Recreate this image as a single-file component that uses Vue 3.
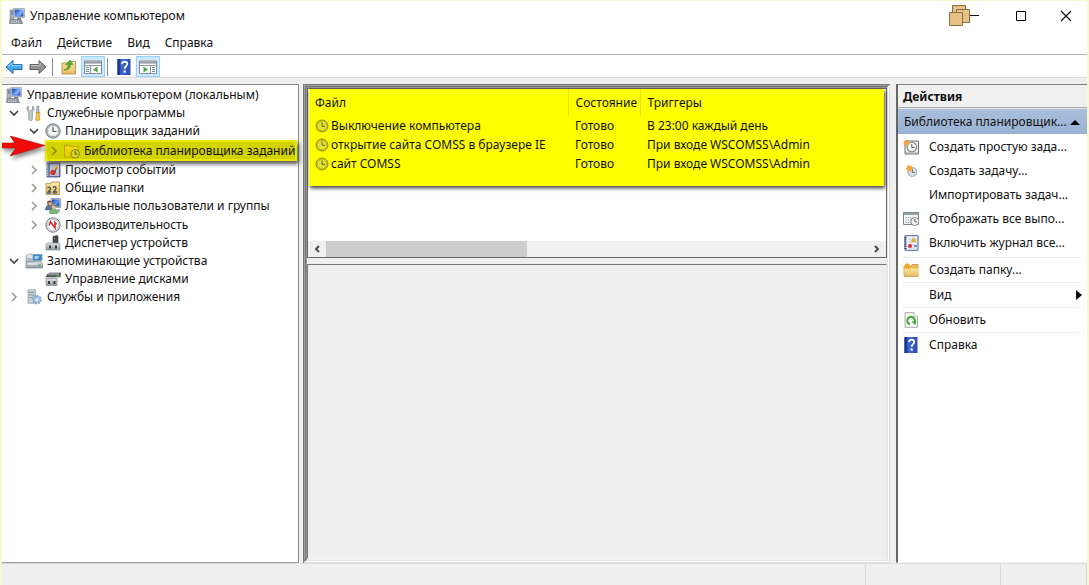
<script setup>
import { ref } from 'vue'

const menus = ['Файл', 'Действие', 'Вид', 'Справка']

const tree = [
  { label: 'Управление компьютером (локальным)', icon: 'computer', level: 'root' },
  { label: 'Служебные программы', icon: 'tools', level: 'one', arrow: 'open' },
  { label: 'Планировщик заданий', icon: 'clock', level: 'two', arrow: 'open' },
  { label: 'Библиотека планировщика заданий', icon: 'library', level: 'three', arrow: 'closed', selected: true },
  { label: 'Просмотр событий', icon: 'events', level: 'two', arrow: 'closed' },
  { label: 'Общие папки', icon: 'shared', level: 'two', arrow: 'closed' },
  { label: 'Локальные пользователи и группы', icon: 'users', level: 'two', arrow: 'closed' },
  { label: 'Производительность', icon: 'perf', level: 'two', arrow: 'closed' },
  { label: 'Диспетчер устройств', icon: 'device', level: 'two' },
  { label: 'Запоминающие устройства', icon: 'storage', level: 'one', arrow: 'open' },
  { label: 'Управление дисками', icon: 'disk', level: 'two' },
  { label: 'Службы и приложения', icon: 'services', level: 'one', arrow: 'closed' }
]

const tasks = [
  { name: 'Выключение компьютера', state: 'Готово', trigger: 'В 23:00 каждый день' },
  { name: 'открытие сайта COMSS в браузере IE', state: 'Готово', trigger: 'При входе WSCOMSS\\Admin' },
  { name: 'сайт COMSS', state: 'Готово', trigger: 'При входе WSCOMSS\\Admin' }
]

const taskActions = [
  { label: 'Создать простую зада...', icon: 'newbasic' },
  { label: 'Создать задачу...', icon: 'newtask' },
  { label: 'Импортировать задач...' },
  { label: 'Отображать все выпо...', icon: 'running' },
  { label: 'Включить журнал все...', icon: 'journal' }
]
const commonActions = [
  { label: 'Создать папку...', icon: 'newfolder' },
  { label: 'Вид', submenu: true },
  { label: 'Обновить', icon: 'refresh' },
  { label: 'Справка', icon: 'help' }
]

const scroll = ref({ size: 37 })
</script>

<template>
  <div class="window">
    <svg class="sprite" aria-hidden="true">
      <defs>
        <linearGradient id="gBlue" x1="0" y1="0" x2="1" y2="1"><stop offset="0" stop-color="#1c3fae" /><stop offset="0.5" stop-color="#5e95ea" /><stop offset="1" stop-color="#1b39a0" /></linearGradient>
        <linearGradient id="gHelp" x1="0" y1="0" x2="1" y2="0"><stop offset="0" stop-color="#1d3c9c" /><stop offset="0.35" stop-color="#3c68cc" /><stop offset="1" stop-color="#2a4cb0" /></linearGradient>
        <linearGradient id="gFolder" x1="0" y1="0" x2="0" y2="1"><stop offset="0" stop-color="#fbe3a0" /><stop offset="1" stop-color="#e9bd62" /></linearGradient>
        <linearGradient id="gMetal" x1="0" y1="0" x2="0" y2="1"><stop offset="0" stop-color="#e3e7ea" /><stop offset="1" stop-color="#8c959b" /></linearGradient>
      </defs>
      <symbol id="computer" viewBox="0 0 16 16">
        <path d="M1 2h4v9H1z" fill="#aeb5ba" stroke="#7f878d" stroke-width=".7" /><path d="M2 4h2M2 6h2" stroke="#5e666c" />
        <path d="M4.500.5l11-.1v9.400l-11-.6z" fill="#d6dbe4" stroke="#8a93a5" stroke-width=".7" /><path d="M5.600 1.600h8.800v7H5.600z" fill="url(#gBlue)" /><path d="M8 8l4-6.400h2.400V4L11 8.600z" fill="#8ab6f5" opacity=".7" />
        <path d="M8 10h4v1.500H8z" fill="#777f88" /><path d="M1 11.500h11l1.500 4H.5z" fill="#8e969c" stroke="#666e74" stroke-width=".6" /><path d="M2.500 13h8M2 14.400h9" stroke="#d5dade" stroke-dasharray="1.200 1" />
      </symbol>
      <symbol id="tools" viewBox="0 0 16 16">
        <path d="M2.200 1v3.400L4.500 6l2-1.400V1c2 1.200 2 4.600-.2 5.900V14c0 2-3.500 2-3.500 0V6.900C.4 5.600.5 2.200 2.200 1z" fill="#c7cdd1" stroke="#858c91" stroke-width=".8" />
        <path d="M10.800 1h2l.3 6.500h-2.600z" fill="#b6bcc0" stroke="#83898e" stroke-width=".6" /><path d="M10 7.500h3.600V9l-.6.700.8 4.500c0 2-4.100 2-4.100 0l.8-4.500-.5-.7z" fill="#f4c443" stroke="#bb8a1b" stroke-width=".7" />
      </symbol>
      <symbol id="clock" viewBox="0 0 16 16">
        <circle cx="8" cy="8" r="7.200" fill="#b8bfc5" stroke="#777f86" stroke-width="1" /><circle cx="8" cy="8" r="5.700" fill="#f5f6f2" stroke="#8b949c" stroke-width=".6" />
        <path d="M8 4v4.500h3.500" fill="none" stroke="#4d565e" stroke-width="1.100" /><path d="M8 2.600v1M8 12.500v1M2.600 8h1M12.500 8h1" stroke="#8a9299" stroke-width=".7" />
      </symbol>
      <symbol id="taskclock" viewBox="0 0 14 14">
        <circle cx="7" cy="7" r="6" fill="#d6d416" stroke="#8d8b18" stroke-width="1" /><circle cx="7" cy="7" r="4.600" fill="#e4e238" stroke="#adab20" stroke-width=".6" /><path d="M7 3.500v3.800h3" fill="none" stroke="#6b6a18" stroke-width="1" />
      </symbol>
      <symbol id="library" viewBox="0 0 16 16">
        <path d="M.5 2h5l1 1.500h7.500V14H.5z" fill="#e9cf00" stroke="#b39b00" stroke-width=".8" /><path d="M1 5h12.500" stroke="#f8ea42" />
        <circle cx="11.200" cy="10.800" r="4.200" fill="#d6d430" stroke="#747412" stroke-width=".9" /><path d="M11.200 8.200v3h2.200" fill="none" stroke="#555410" />
      </symbol>
      <symbol id="events" viewBox="0 0 16 16">
        <path d="M2 1h13v14H2z" fill="#6a79a5" stroke="#41507d" stroke-width=".8" /><path d="M5 2h9v12H5z" fill="#b9c3dd" /><path d="M2.500 2v12" stroke="#ced5e5" stroke-width="1.400" stroke-dasharray="1.200 1" />
        <path d="M11 2.500l2.500 4.500h-5z" fill="#f6bd26" /><circle cx="8" cy="10.500" r="2.700" fill="#d93632" /><path d="M11.500 5.500l-2 6" stroke="#6d3f44" />
      </symbol>
      <symbol id="shared" viewBox="0 0 16 16">
        <path d="M1 3.500h5l1-1.500h7.500v12.500H1z" fill="url(#gFolder)" stroke="#b58d3f" stroke-width=".8" /><path d="M7 4h7" stroke="#fff3c5" />
        <path d="M2.500 8c2-2 4 0 2.500 2L3 12h3M8 7.500c2-2 4 0 2.500 2L8.500 12h3.500" fill="none" stroke="#3f525a" stroke-width="1.300" /><path d="M2 13.500h4M8 13.500h4" stroke="#5d87ac" />
      </symbol>
      <symbol id="users" viewBox="0 0 16 16">
        <path d="M6 .5h9.500v9H6z" fill="#cbd5e8" stroke="#7585a6" stroke-width=".7" /><path d="M7 1.500h7.500v7H7z" fill="url(#gBlue)" />
        <path d="M.5 12c0-4 2-5 4-5s4 1 4 5z" fill="#57799f" stroke="#375574" stroke-width=".5" /><circle cx="4.500" cy="5" r="2.400" fill="#735035" /><circle cx="5" cy="5.700" r="1.600" fill="#e1b78e" />
        <path d="M4.500 15.500c0-4 2-5 4-5s4 1 4 5z" fill="#7eb776" stroke="#467e48" stroke-width=".5" /><circle cx="8.500" cy="8.600" r="2.300" fill="#bd8b51" /><circle cx="8.700" cy="9.200" r="1.500" fill="#edc59b" /><path d="M12 11h3v3.500h-3z" fill="#a6adb5" />
      </symbol>
      <symbol id="perf" viewBox="0 0 16 16">
        <circle cx="8" cy="8" r="7.200" fill="#dce0e2" stroke="#777f84" stroke-width="1" /><circle cx="8" cy="8" r="5.400" fill="#fff" stroke="#a4abb0" stroke-width=".6" /><path d="M4.200 8.500L5.500 4.800 10 11V5.500l1.500 2" fill="none" stroke="#d0272c" stroke-width="1.500" />
      </symbol>
      <symbol id="device" viewBox="0 0 16 16">
        <path d="M8 1.500l4-1 1 .8V9H8z" fill="#454b4e" stroke="#252a2c" stroke-width=".6" /><path d="M9.500 3v1" stroke="#a6afb2" /><path d="M2 8h12l1 1v6H1V9z" fill="url(#gMetal)" stroke="#8d9498" stroke-width=".7" /><path d="M4 10.500h2v3H4zM10 10.500h2v3h-2z" fill="#343b3f" />
      </symbol>
      <symbol id="storage" viewBox="0 0 18 16">
        <path d="M1 3.500v6c0 2 10 2 10 0v-6z" fill="url(#gMetal)" stroke="#8d969c" stroke-width=".6" /><ellipse cx="6" cy="3.500" rx="5" ry="2.500" fill="#dfe3e6" stroke="#8d969c" stroke-width=".7" />
        <path d="M8 1.500h9v6H8z" fill="#3e82bf" stroke="#799eb9" stroke-width=".8" /><path d="M9.500 3h5l-2 3h-3z" fill="#92d3ed" /><path d="M2 9l14-.5 1.500 2v4.500H1v-4z" fill="url(#gMetal)" stroke="#7e878c" stroke-width=".7" /><path d="M3 11h9" stroke="#f2f4f5" /><path d="M13.500 12.500h2" stroke="#35b23c" stroke-width="1.500" />
      </symbol>
      <symbol id="disk" viewBox="0 0 16 16">
        <path d="M2 4l2-2h12l-1 4H1z" fill="#596166" stroke="#363d40" stroke-width=".6" /><path d="M3 3h11" stroke="#c4ccd0" /><path d="M11.500 5h3" stroke="#49d344" stroke-width="1.200" /><path d="M1 7.500h11v7H1z" fill="url(#gMetal)" stroke="#858c90" stroke-width=".7" /><path d="M3 10h2v3H3zM8.500 10h2v3h-2z" fill="#343b3f" />
      </symbol>
      <symbol id="services" viewBox="0 0 16 16">
        <path d="M2 .8h7.500v13.500H2z" fill="#c5d0d5" stroke="#8e9ba1" stroke-width=".7" /><path d="M3 3.500h5.500M3 6h5.500M3 8.500h4" stroke="#8797a0" stroke-width=".9" />
        <circle cx="11" cy="10.700" r="3.600" fill="#8fb6dd" stroke="#7ba3cb" stroke-width="2.200" stroke-dasharray="1.700 1" /><circle cx="11" cy="10.700" r="3.100" fill="#a3c5e5" /><circle cx="11" cy="10.700" r="1.300" fill="#eaf2f8" />
      </symbol>
      <symbol id="newbasic" viewBox="0 0 16 16">
        <path d="M2 2h13.500v13H2z" fill="#eceae8" stroke="#757170" stroke-width="1" /><path d="M3 14h12v-1" stroke="#aaa4a0" fill="none" /><circle cx="8.800" cy="8" r="4.700" fill="#f8f8f7" stroke="#7c8388" stroke-width="1.100" /><path d="M8.800 5v3.500h2.700" fill="none" stroke="#4d555a" stroke-width="1" /><path d="M3.500 0l1 2.200 2-.5-.9 2 1.700 1.200-2.200.4.200 2.200-1.700-1.500L2 7.500V5.300L0 5l1.500-1.300-1-2 2.200.5z" fill="#f4a632" />
      </symbol>
      <symbol id="newtask" viewBox="0 0 16 16">
        <circle cx="9.300" cy="9" r="4.300" fill="#dfe7ee" stroke="#a3adb6" stroke-width="1.200" /><path d="M9.300 6v3.400h2.500" fill="none" stroke="#51616d" /><path d="M6 1l1 2.300 2.300-.8-.9 2.300 2 1.200-2.300.6.300 2.500-2-1.600-2 1.600V6.600L2.500 6l1.800-1.300-1-2.200 2.200.7z" fill="#f4a632" />
      </symbol>
      <symbol id="running" viewBox="0 0 16 16">
        <path d="M.5 1.500h15v12H.5z" fill="#f4f5f6" stroke="#7e8589" /><path d="M1 3h14" stroke="#96a0a7" stroke-width="2" /><path d="M2.500 6.500h7M2.500 9h7M2.500 11.500h6" stroke="#9da9b1" stroke-width="1.200" stroke-dasharray="1.300 .8" /><circle cx="11.800" cy="10.500" r="4" fill="#f2f3f3" stroke="#82898d" /><path d="M11.800 8v2.700h2" fill="none" stroke="#4e555a" />
      </symbol>
      <symbol id="journal" viewBox="0 0 16 16">
        <path d="M2 .7h13v14.600H2z" fill="#f5f7fb" stroke="#4c6291" stroke-width="1" /><path d="M2.500 2v12" stroke="#2b4173" stroke-width="2.200" stroke-dasharray="1.200 1" /><path d="M5 4h9M5 7h9M5 10h9M5 13h9" stroke="#a9bbdc" stroke-width=".8" /><path d="M10.500 2.500l2.500 4.300H8z" fill="#f7bd21" stroke="#d99917" stroke-width=".5" /><circle cx="7" cy="11" r="2" fill="#d9312c" /><path d="M11 11h3" stroke="#5278c8" stroke-width="1.500" />
      </symbol>
      <symbol id="newfolder" viewBox="0 0 16 16">
        <path d="M1 4h7l1.200-1.500h5.800V14.500H1z" fill="#e9b94e" stroke="#b9893c" stroke-width=".7" /><path d="M1.300 6.500h14v7.700h-14z" fill="url(#gFolder)" /><path d="M4 0l1 2.300 2.200-.8-.7 2.200 2 1.200-2.200.4.200 2.400L4.500 6 3 7.700V5.300L.5 5l2-1.300-.9-2.200 2 .8z" fill="#f5a223" />
      </symbol>
      <symbol id="refresh" viewBox="0 0 16 16">
        <path d="M2 .7h9l3.500 3.500v11.100H2z" fill="#f5f8f4" stroke="#909890" stroke-width=".8" /><path d="M11 .7v3.500h3.500" fill="#fff" stroke="#a1a8a1" stroke-width=".6" /><path d="M7 12.300A3.800 3.800 0 1 1 11.600 10" fill="none" stroke="#43a737" stroke-width="2" /><path d="M8.500 9.700l4.700-.7-.7 4.300z" fill="#43a737" />
      </symbol>
      <symbol id="help" viewBox="0 0 16 16">
        <path d="M1.500 0h13v16h-13z" fill="url(#gHelp)" /><path d="M1.500 0h2.200v16H1.500z" fill="#1a3388" /><path d="M6 5.200C6 1.700 11.500 2 11.300 5c-.1 2-2.600 2.200-2.600 4.700" fill="none" stroke="#fff" stroke-width="1.800" /><circle cx="8.700" cy="12.500" r="1.200" fill="#fff" />
      </symbol>
      <symbol id="upfolder" viewBox="0 0 16 16">
        <path d="M1 4h7l1-1.500h5.500v12.500H1z" fill="url(#gFolder)" stroke="#ad8942" stroke-width=".8" /><path d="M3 11c3.500-1 4-3.500 4-5.500H4.500L9 1l3 4.500H9.500C9.500 9 7.500 11 3 11z" fill="#58b339" stroke="#2e7e21" stroke-width=".5" />
      </symbol>
      <symbol id="panel" viewBox="0 0 18 16">
        <path d="M.5 2h17v12.500H.5z" fill="#fff" stroke="#858b90" /><path d="M1 3.500h16" stroke="#969ca2" stroke-width="2.200" /><path d="M1 6.500h16M6.500 6.500v8" stroke="#8e9498" /><path d="M2 8.500h3M2 10.500h3M2 12.500h3" stroke="#6088af" /><path d="M13.500 7.500v6L9 10.500z" fill="#4ba73c" />
      </symbol>
    </svg>

    <header class="titlebar">
      <svg class="icon"><use href="#computer" /></svg>
      <h1 class="title">Управление компьютером</h1>
      <div class="caption">
        <button class="cap minimize" aria-label="Свернуть">
          <svg width="32" height="24" viewBox="0 0 32 24">
            <g fill="#e7c287" stroke="#8c6c42"><path d="M4.500 1.500h13v12h-13z" /><path d="M8.500 5.500h13v13h-13z" /><path d="M1.500 8.500h13v13h-13z" /></g>
            <path d="M22 11.500h9" stroke="#111" />
          </svg>
        </button>
        <button class="cap" aria-label="Развернуть"><svg width="12" height="12"><path d="M1.500 1.500h9v9h-9z" fill="none" stroke="#000" /></svg></button>
        <button class="cap" aria-label="Закрыть"><svg width="12" height="12"><path d="M1 1l10 10M11 1L1 11" fill="none" stroke="#111" stroke-width="1.200" /></svg></button>
      </div>
    </header>

    <nav class="menubar">
      <button v-for="m in menus" :key="m">{{ m }}</button>
    </nav>

    <div class="toolbar">
      <button class="tool" aria-label="Назад"><svg width="18" height="16" viewBox="0 0 18 16"><path d="M1 8l7-6.500v4h9v5H8v4z" fill="#45a8e7" stroke="#1c6cae" /><path d="M3 7.500l4-3.500v2.500h9" fill="none" stroke="#9bdbfb" /></svg></button>
      <button class="tool" aria-label="Вперед"><svg width="18" height="16" viewBox="0 0 18 16"><path d="M17 8l-7-6.500v4H1v5h9v4z" fill="#929292" stroke="#5f5f5f" /><path d="M2 6.500h9V4" fill="none" stroke="#c4c4c4" /></svg></button>
      <span class="divider"></span>
      <button class="tool" aria-label="Вверх"><svg class="icon"><use href="#upfolder" /></svg></button>
      <button class="tool active" aria-label="Дерево консоли"><svg class="icon wide"><use href="#panel" /></svg></button>
      <span class="divider"></span>
      <button class="tool" aria-label="Справка"><svg class="icon"><use href="#help" /></svg></button>
      <button class="tool active" aria-label="Панель действий"><svg class="icon wide flip"><use href="#panel" /></svg></button>
    </div>

    <main class="work">
      <nav class="tree" aria-label="Дерево консоли">
        <ul>
          <li v-for="n in tree" :key="n.label" :class="[n.level, { selected: n.selected }]">
            <svg v-if="n.selected" class="pointer" width="44" height="22" viewBox="0 0 44 22" aria-hidden="true"><path d="M0 7h13L8 0l35 9.500L8 20l6-8H0z" fill="#f00b0b" stroke="#b90f0f" stroke-width=".6" /></svg>
            <span class="node">
              <button v-if="n.arrow" class="expander" :class="n.arrow" :aria-label="n.label">
                <svg width="10" height="10"><path :d="n.arrow === 'open' ? 'M1 3l4 4 4-4' : 'M3 1l4 4-4 4'" fill="none" stroke="currentColor" stroke-width="1.600" /></svg>
              </button>
              <span v-else-if="n.level !== 'root'" class="expander"></span>
              <svg class="icon" :class="{ wide: n.icon === 'storage' }"><use :href="'#' + n.icon" /></svg>
              <a href="#">{{ n.label }}</a>
            </span>
          </li>
        </ul>
      </nav>

      <section class="center">
        <div class="list">
          <table>
            <colgroup><col class="c-name" /><col class="c-state" /><col /></colgroup>
            <thead><tr><th>Файл</th><th>Состояние</th><th>Триггеры</th></tr></thead>
            <tbody>
              <tr v-for="t in tasks" :key="t.name">
                <td><span class="task"><svg class="small"><use href="#taskclock" /></svg>{{ t.name }}</span></td>
                <td>{{ t.state }}</td>
                <td>{{ t.trigger }}</td>
              </tr>
            </tbody>
          </table>
          <div class="scrollbar">
            <button aria-label="Влево"><svg width="8" height="8"><path d="M6 1L3 4l3 3" fill="none" stroke="#444" stroke-width="1.800" /></svg></button>
            <div class="track"><div class="thumb" :style="{ width: scroll.size + '%' }"></div></div>
            <button aria-label="Вправо"><svg width="8" height="8"><path d="M2 1l3 3-3 3" fill="none" stroke="#444" stroke-width="1.800" /></svg></button>
          </div>
        </div>
        <div class="details"></div>
      </section>

      <aside class="actions">
        <h2>Действия</h2>
        <button class="group"><span>Библиотека планировщик...</span><svg width="10" height="6"><path d="M0 6l5-5 5 5z" fill="#000" /></svg></button>
        <div class="primary">
          <button v-for="a in taskActions" :key="a.label" class="action">
            <svg class="icon"><use v-if="a.icon" :href="'#' + a.icon" /></svg><span>{{ a.label }}</span>
          </button>
        </div>
        <div class="common">
          <button v-for="a in commonActions" :key="a.label" class="action">
            <svg class="icon"><use v-if="a.icon" :href="'#' + a.icon" /></svg><span>{{ a.label }}</span>
            <svg v-if="a.submenu" class="more" width="6" height="10"><path d="M0 0l6 5-6 5z" fill="#000" /></svg>
          </button>
        </div>
      </aside>
    </main>

    <footer class="status"><span></span><span class="cell"></span><span class="cell end"></span></footer>
  </div>
</template>

<style>
body { margin: 0; background: #fff; }
</style>

<style scoped>
.window {
  box-sizing: border-box;
  min-height: 100vh;
  display: flex;
  flex-direction: column;
  border: 2px solid #f8f8d2;
  border-top-width: 1px;
  border-bottom: 0;
  background: #fff;
  color: #101010;
  font: 12px/16px "Noto Sans", "Open Sans", sans-serif;
}
.sprite { position: absolute; width: 0; height: 0; }
button { padding: 0; border: 0; background: none; color: inherit; font: inherit; }
a { color: inherit; text-decoration: none; }
h1, h2, ul { margin: 0; padding: 0; font: inherit; }
svg { display: block; flex: none; }
.icon { width: 16px; height: 16px; }
.icon.wide { width: 18px; }
.flip { transform: scaleX(-1); }

.titlebar { display: flex; align-items: center; height: 30px; padding-left: 7px; gap: 5px; }
.caption { display: flex; margin-left: auto; }
.cap { display: grid; place-items: center; width: 47px; height: 28px; }
.cap:last-child { width: 43px; }
.cap.minimize { width: 66px; }

.menubar { display: flex; gap: 15px; height: 23px; padding-left: 9px; border-bottom: 1px solid #b4b4b4; }

.toolbar { display: flex; align-items: center; height: 21px; padding-top: 1px; border-bottom: 1px solid #dcdcdc; }
.tool { display: grid; place-items: center; width: 24px; height: 21px; }
.tool.active { box-sizing: border-box; background: #cce8ff; border: 1px solid #99d1ff; }
.divider { width: 1px; height: 18px; margin: 0 4px 0 2px; background: #888; }

.work {
  flex: 1;
  display: grid;
  grid-template-columns: 297px minmax(0, 1fr) 191px;
  padding-top: 6px;
  background: #efefef;
}
.tree { padding-top: 1px; background: #fff; border: 1px solid #8c8c8c; border-left: 0; border-bottom: 1px solid #a0a0a0; }
.tree ul { display: grid; grid-template-rows: repeat(12, 1fr); height: 220px; list-style: none; }
.tree li { position: relative; display: flex; align-items: center; white-space: nowrap; }
.node { display: flex; align-items: center; gap: 4px; }
.root { padding-left: 4px; }
.root .node { gap: 5px; }
.one { padding-left: 4px; }
.two { padding-left: 24px; }
.three { padding-left: 43px; }
.expander { display: grid; place-items: center; width: 15px; height: 16px; color: #9a9a9a; }
.expander.open { color: #404040; }
.one .icon { width: 18px; }
.selected { z-index: 1; }
.selected .node { height: 17px; background: #d3d300; border: 2px solid #e8e800; box-shadow: 2px 3px 4px #555; }
.selected .expander { width: 13px; color: #8c8c00; }
.pointer { position: absolute; left: 0; top: -4px; z-index: 2; filter: drop-shadow(2px 3px 2px #888); }

.center {
  display: flex;
  flex-direction: column;
  gap: 6px;
  margin: 0 6px 0 4px;
  padding: 4px 3px 4px 4px;
  box-shadow:
    inset 1px 1px #777, inset -1px -1px #dedede,
    inset 2px 2px #a0a0a0, inset -2px -2px #fff,
    inset 3px 3px #777, inset -3px -3px #e4e4e4,
    inset 4px 4px #959595;
}
.list { display: flex; flex-direction: column; height: 168px; background: #fff; border: 1px solid #666; }
table {
  width: calc(100% - 3px);
  height: 97px;
  margin: 0 2px 0 1px;
  table-layout: fixed;
  border-collapse: collapse;
  background: #ff0;
  box-shadow: 1px 2px 4px #333;
}
.c-name { width: 259px; }
.c-state { width: 72px; }
th, td { padding: 0 0 0 7px; text-align: left; font-weight: 400; white-space: nowrap; }
th:first-child, td:first-child { padding-left: 6px; }
th { height: 26px; padding-top: 1px; border-right: 1px solid #e4e400; }
th:last-child { border-right: 0; }
td { height: 19px; }
tbody::after { content: ""; display: table-row; height: 13px; }
.task { display: flex; align-items: center; gap: 2px; }
.small { width: 14px; height: 14px; }
.scrollbar { display: flex; height: 16px; margin-top: auto; background: #f0f0f0; }
.scrollbar button { display: grid; place-items: center; width: 18px; }
.track { flex: 1; }
.thumb { height: 100%; background: #cdcdcd; }
.details { flex: 1; border: 1px solid #777; border-right-color: #e8e8e8; border-bottom-color: #f6f6f6; }

.actions { border: 1px solid #808080; border-right: 0; border-left: 2px solid #666; border-bottom: 1px solid #f8f8f8; background: #fff; }
.actions h2 { height: 22px; padding-left: 5px; line-height: 24px; font-weight: 700; background: #f0f0f0; border-bottom: 1px solid #a9a9a9; }
.group {
  display: flex;
  align-items: center;
  justify-content: space-between;
  width: 100%;
  height: 26px;
  padding: 0 7px 0 6px;
  background: linear-gradient(#a9bfdb, #9ab3d3);
  border-top: 1px solid #dfe8f3;
  white-space: nowrap;
}
.primary, .common { margin: 0 5px; }
.primary { padding: 1px 0 2px; }
.action { display: flex; align-items: center; gap: 10px; width: 100%; height: 24px; text-align: left; white-space: nowrap; }
.common .action { height: 25px; border-top: 1px solid #ececec; }
.more { margin-left: auto; }

.status { display: grid; grid-template-columns: 1fr 135px 87px; height: 21px; background: #efefef; border-top: 1px solid #dcdcdc; }
.cell { border-left: 1px solid #d8d8d8; }
.end { border-right: 1px solid #d8d8d8; }
</style>
